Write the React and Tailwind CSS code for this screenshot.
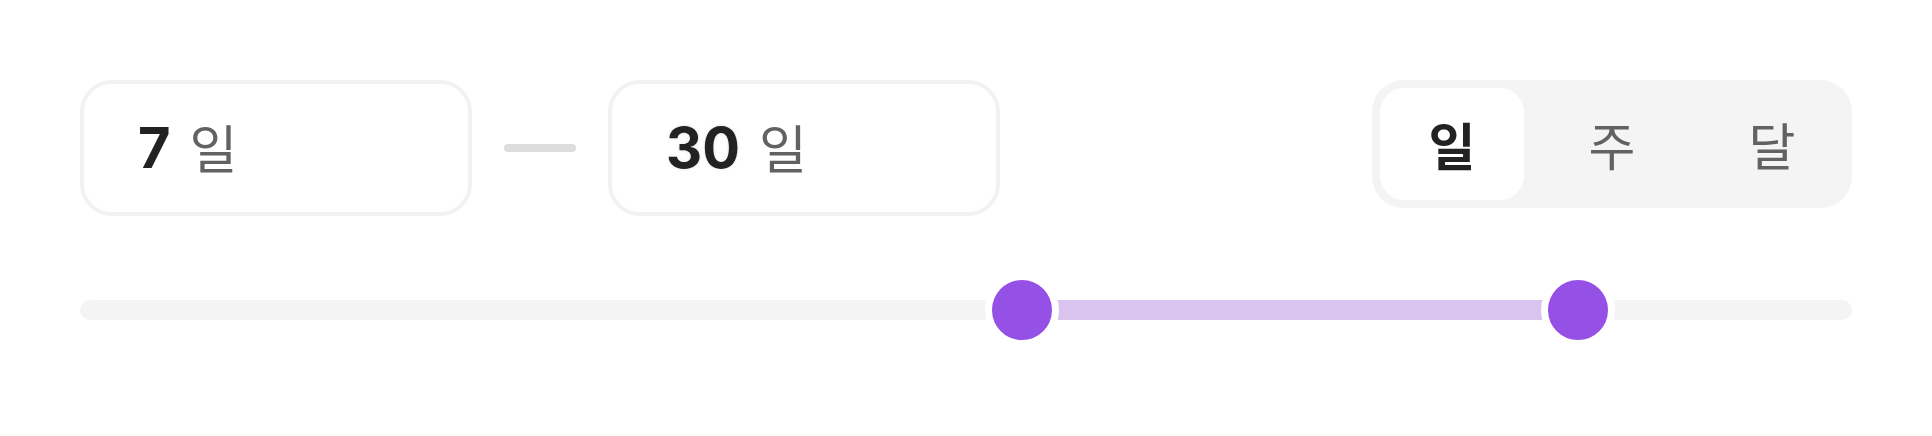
import React, { useState } from 'react';

const FONT = "font-['Inter','Noto_Sans_CJK_KR',sans-serif]";

const UNITS = [
  { key: 'day', label: '일' },
  { key: 'week', label: '주' },
  { key: 'month', label: '달' },
];

// thumb centres along the 1772px track
const RANGE = { from: 942, to: 1498, width: 1772 };

function ValueBox({ value, unit, halo }) {
  return (
    <div className="w-[392px] h-[136px] shrink-0 rounded-[32px] border-[4px] border-[#f2f2f2] bg-white flex items-center pl-[54px]">
      <span className={`flex items-center leading-none ${FONT}`}>
        <span
          className={`text-[56px] font-bold text-[#222222] ${halo ? '[text-shadow:0_0_2px_#e4e4e4,0_0_4px_#ececec]' : ''}`}
        >
          {value}
        </span>
        <span className="ml-[19px] mt-[6px] text-[52px] text-[#626262] font-normal">{unit}</span>
      </span>
    </div>
  );
}

export default function App() {
  const [unit, setUnit] = useState('day');
  const pct = (px) => `${(px / RANGE.width) * 100}%`;

  return (
    <div className="w-[1932px] h-[436px] bg-white">
      <div className={`w-full h-full rounded-[44px] bg-white px-[80px] pt-[80px] ${FONT}`}>
        {/* top row */}
        <div className="flex items-start justify-between">
          <div className="flex items-center gap-[32px]">
            <ValueBox value="7" unit="일" />
            <div className="w-[72px] h-[8px] rounded-full bg-[#dddddd]" />
            <ValueBox value="30" unit="일" halo />
          </div>

          <div className="flex gap-[16px] p-[8px] rounded-[32px] bg-[#f4f4f4]">
            {UNITS.map((u) => (
              <button
                key={u.key}
                onClick={() => setUnit(u.key)}
                className={`w-[144px] h-[112px] pt-[7px] rounded-[24px] flex items-center justify-center text-[51px] leading-none ${
                  unit === u.key ? 'bg-white font-semibold text-[#222222]' : 'text-[#626262] font-normal'
                }`}
              >
                {u.label}
              </button>
            ))}
          </div>
        </div>

        {/* range slider */}
        <div className="relative mt-[64px] h-[60px] flex items-center">
          <div className="w-full h-[20px] rounded-full bg-[#f4f4f4]" />
          <div
            className="absolute h-[20px] bg-[#d9c4f0]"
            style={{ left: pct(RANGE.from), right: `calc(100% - ${pct(RANGE.to)})` }}
          />
          {[RANGE.from, RANGE.to].map((px) => (
            <div
              key={px}
              className="absolute w-[74px] h-[74px] -ml-[37px] rounded-full border-[7px] border-white bg-[#9550e6]"
              style={{ left: pct(px) }}
            />
          ))}
        </div>
      </div>
    </div>
  );
}
